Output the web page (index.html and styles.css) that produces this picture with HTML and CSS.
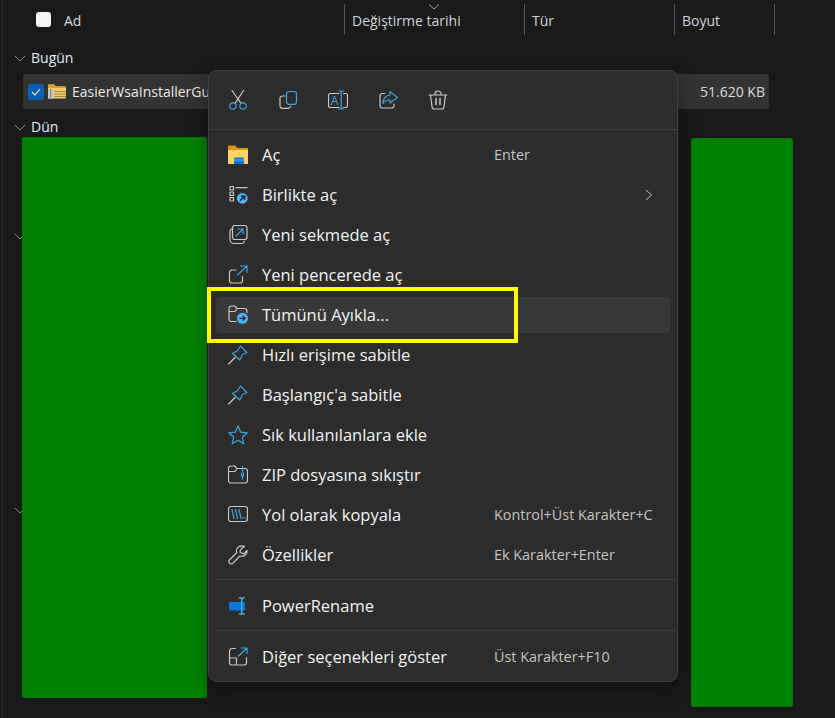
FILE: index.html
```html
<!DOCTYPE html>
<html lang="tr">
<head>
<meta charset="utf-8">
<title>Explorer</title>
<link rel="stylesheet" href="styles.css">
</head>
<body>
<div class="explorer">
  <header class="head">
    <div class="col-name"><span class="check-empty"></span><span class="head-label">Ad</span></div>
    <div class="col col-date">Değiştirme tarihi</div>
    <div class="col col-type">Tür</div>
    <div class="col col-size">Boyut</div>
    <div class="col col-end"></div>
  </header>
  <svg class="sort" width="12" height="6" viewBox="0 0 12 6"><path d="M1 .5L6 5L11 .5" fill="none" stroke="#aaa"/></svg>

  <div class="group"><svg class="chev" width="12" height="7" viewBox="0 0 12 7"><path d="M1 1L6 6L11 1" fill="none" stroke="#8c8c8c"/></svg><span>Bugün</span></div>
  <div class="row">
    <span class="check-on"><svg width="10" height="8" viewBox="0 0 10 8"><path d="M1 4.2L3.8 7L9 1" fill="none" stroke="#fff" stroke-width="1.1"/></svg></span>
    <svg class="zip" width="18" height="15" viewBox="0 0 18 15"><path d="M0 1.5A1 1 0 0 1 1 .5H6L8 2.5H17A1 1 0 0 1 18 3.5V13.5A1 1 0 0 1 17 14.5H1A1 1 0 0 1 0 13.5Z" fill="#f6cf66"/><path d="M0 1.5A1 1 0 0 1 1 .5H6L8 2.5H18V4H0Z" fill="#d9a32a"/><path d="M6 7.5H18M6 10H18M6 12.500H18" stroke="#8a7a45" stroke-width=".8"/><rect x="0" y="5" width="5.500" height="9.500" fill="#c9c9c9"/><path d="M2.700 5V14" stroke="#777" stroke-width="1"/></svg>
    <span class="file-name">EasierWsaInstallerGui</span>
    <span class="file-size">51.620 KB</span>
  </div>
  <div class="group"><svg class="chev" width="12" height="7" viewBox="0 0 12 7"><path d="M1 1L6 6L11 1" fill="none" stroke="#8c8c8c"/></svg><span>Dün</span></div>
  <div class="group group-mid"><svg class="chev" width="12" height="7" viewBox="0 0 12 7"><path d="M1 1L6 6L11 1" fill="none" stroke="#8c8c8c"/></svg></div>
  <div class="group group-low"><svg class="chev" width="12" height="7" viewBox="0 0 12 7"><path d="M1 1L6 6L11 1" fill="none" stroke="#8c8c8c"/></svg></div>
</div>

<div class="redact redact-left"></div>
<div class="redact redact-right"></div>

<nav class="menu">
  <div class="toolbar">
    <svg class="ic" viewBox="0 0 20 20"><path class="g" d="M4 .5L12.800 13.200M15.500 .5L7.200 13.200"/><circle class="b" cx="5" cy="16" r="3.200"/><circle class="b" cx="15" cy="16" r="3.200"/></svg>
    <svg class="ic" viewBox="0 0 20 20"><rect class="b" x="8.500" y="1.500" width="10" height="12.800" rx="2.500"/><path class="g" d="M7 6H4.500A2.500 2.500 0 0 0 2 8.500V15.800A2.500 2.500 0 0 0 4.500 18.300H10A2.500 2.500 0 0 0 12.500 16.300"/></svg>
    <svg class="ic" viewBox="0 0 20 20"><path class="g" d="M11 3.500H2.500A2 2 0 0 0 .5 5.500V15.500A2 2 0 0 0 2.500 17.500H11M15.500 3.500H17.500A2 2 0 0 1 19.500 5.500V15.500A2 2 0 0 1 17.500 17.500H15.500"/><path class="b" d="M11 1H15.500M13.250 1V19M11 19H15.500"/><text class="ic-a" x="2.800" y="15">A</text></svg>
    <svg class="ic" viewBox="0 0 20 20"><path class="g" d="M7 3.500H4.500A2.500 2.500 0 0 0 2 6V15.500A2.500 2.500 0 0 0 4.500 18H13.500A2.500 2.500 0 0 0 16 15.500V14"/><path class="b" d="M12 1.500L19.500 7.500L12 13V10C8.500 10 6.500 11 5 13.500C5 8.500 8 5 12 5Z"/></svg>
    <svg class="ic" viewBox="0 0 20 20"><path class="g" d="M1 5H19M7 4.500C7 2.500 8.300 1 10 1S13 2.500 13 4.500M2.500 5L4 16.500A2.500 2.500 0 0 0 6.500 19H13.500A2.500 2.500 0 0 0 16 16.500L17.500 5"/><path class="g thick" d="M8 8.500V14.500M12 8.500V14.500"/></svg>
  </div>
  <ul class="items">
    <li class="item"><svg class="ic" viewBox="0 0 20 20"><path d="M0 1.500A1 1 0 0 1 1 .5H7L9.500 3H20V6H0Z" fill="#d69a12"/><path d="M0 5H20V19H0Z" fill="#fdd262"/><path d="M6 14A1.500 1.500 0 0 1 7.500 12.500H14.500A1.500 1.500 0 0 1 16 14V19H6Z" fill="#0f78d4"/><path d="M6 15H16" stroke="#6cb8f0"/></svg><span>Aç</span><span class="key">Enter</span></li>
    <li class="item"><svg class="ic" viewBox="0 0 20 20"><path class="g" d="M2 1.500H5.500V5H2ZM2 7H5.500V10.500H2ZM2 12.500H5.500V16H2ZM8 2.700H19"/><circle cx="14.300" cy="13.300" r="5.400" fill="#4cb6f5"/><path d="M12 15.800L16.300 11.500M13 11.200H16.600V14.800" fill="none" stroke="#1c1c1c" stroke-width="1.400"/></svg><span>Birlikte aç</span><svg class="more" width="8" height="12" viewBox="0 0 8 12"><path d="M1 1L6.500 6L1 11" fill="none" stroke="#c8c8c8"/></svg></li>
    <li class="item"><svg class="ic" viewBox="0 0 20 20"><rect class="g" x="4.500" y=".5" width="14.500" height="14" rx="2.500"/><path class="g" d="M4.500 3.500A3 3 0 0 0 2 6.500V14.500A4 4 0 0 0 6 18.500H13.500A3 3 0 0 0 16.500 16"/><path class="b" d="M8 11L15 4M10 4H15V9"/></svg><span>Yeni sekmede aç</span></li>
    <li class="item"><svg class="ic" viewBox="0 0 20 20"><path class="g" d="M8 5H4A2.500 2.500 0 0 0 1.500 7.500V15.500A2.500 2.500 0 0 0 4 18H12A2.500 2.500 0 0 0 14.500 15.500V11.500"/><path class="b" d="M9.500 10L19 1M12.500 1H19V7.500"/></svg><span>Yeni pencerede aç</span></li>
    <li class="item hover"><svg class="ic" viewBox="0 0 20 20"><path class="g" d="M8 16.500H3.500A2.500 2.500 0 0 1 1 14V3.500A2.500 2.500 0 0 1 3.500 1H6.500L9 3.500H16.500A2.500 2.500 0 0 1 19 6V7.500M1 6.500H7L9 3.500"/><circle cx="14.500" cy="13.300" r="5.500" fill="#4cb6f5"/><path d="M11.500 13.300H17M14.700 11L17 13.300L14.700 15.600" fill="none" stroke="#1c1c1c" stroke-width="1.300"/></svg><span>Tümünü Ayıkla...</span></li>
    <li class="item"><svg class="ic" viewBox="0 0 20 20"><path class="b" d="M12.500 1L19 7.500L14.500 9.500L11.800 15L4.500 8.500L9.800 5.500Z"/><path class="g" d="M.7 19L7 12.500"/></svg><span>Hızlı erişime sabitle</span></li>
    <li class="item"><svg class="ic" viewBox="0 0 20 20"><path class="b" d="M12.500 1L19 7.500L14.500 9.500L11.800 15L4.500 8.500L9.800 5.500Z"/><path class="g" d="M.7 19L7 12.500"/></svg><span>Başlangıç'a sabitle</span></li>
    <li class="item"><svg class="ic" viewBox="0 0 20 20"><path class="b" d="M10 1L12.700 7.200L19.300 7.800L14.300 12.200L15.800 18.800L10 15.300L4.200 18.800L5.700 12.200L.7 7.800L7.300 7.200Z"/></svg><span>Sık kullanılanlara ekle</span></li>
    <li class="item"><svg class="ic" viewBox="0 0 20 20"><path class="g" d="M3 1H6.500L9 3.500H17A2.500 2.500 0 0 1 19.500 6V15.500A2.500 2.500 0 0 1 17 18H3A2.500 2.500 0 0 1 .5 15.500V3.500A2.500 2.500 0 0 1 3 1ZM.5 6.500H7L9 3.500"/><path class="b" d="M14.500 1V3M14.500 4.500V6.500M13.500 8H15.500V11H13.500ZM14.500 11V14"/></svg><span>ZIP dosyasına sıkıştır</span></li>
    <li class="item"><svg class="ic" viewBox="0 0 20 20"><rect class="g" x=".5" y="1.500" width="19" height="15" rx="2.500"/><path class="b" d="M4 4.500L6 13.500M7.500 4.500L9.500 13.500M11 4.500L13 13.500M14.800 13H15.800M16.800 13H17.600"/></svg><span>Yol olarak kopyala</span><span class="key">Kontrol+Üst Karakter+C</span></li>
    <li class="item"><svg class="ic" viewBox="0 0 20 20"><path class="g" d="M14 .8A5.300 5.300 0 0 0 8.700 7.800L1.600 14.800A2.300 2.300 0 0 0 4.900 18.100L11.900 11A5.300 5.300 0 0 0 19 5.500L15.500 9L11.800 7L13.500 3.500L16.500 1.500A5.300 5.300 0 0 0 14 .8Z"/></svg><span>Özellikler</span><span class="key">Ek Karakter+Enter</span></li>
    <li class="sep"></li>
    <li class="item"><svg class="ic" viewBox="0 0 20 20"><rect x="1" y="6" width="16" height="8.500" rx="1" fill="#0f78d4"/><path d="M10.700 2H16.700M13.700 2V18M10.700 18H16.700" fill="none" stroke="#3bb0e8" stroke-width="1.500"/></svg><span>PowerRename</span></li>
    <li class="sep"></li>
    <li class="item"><svg class="ic" viewBox="0 0 20 20"><path class="g" d="M7.500 1.500H4A2.500 2.500 0 0 0 1.500 4V15.500A2.500 2.500 0 0 0 4 18H16A2.500 2.500 0 0 0 18.500 15.500V10.500M1.500 11H8.500V18"/><path class="b" d="M10.500 9L19 1M13 1H19V6.500"/></svg><span>Diğer seçenekleri göster</span><span class="key">Üst Karakter+F10</span></li>
  </ul>
</nav>

<div class="callout"></div>
</body>
</html>
```

FILE: styles.css
```css
* { box-sizing: border-box; }
html, body { margin: 0; padding: 0; }
body {
  position: relative;
  width: 835px;
  height: 718px;
  overflow: hidden;
  background: #191919;
  font-family: "Open Sans", "Noto Sans", sans-serif;
  color: #e6e6e6;
}
.explorer {
  height: 718px;
  margin-left: 2px;
  border-left: 1px solid #2a2a2a;
  font-size: 14px;
}
.head { display: flex; height: 40px; padding-top: 4px; }
.col-name { display: flex; align-items: flex-start; width: 341px; padding: 8px 0 0 33px; }
.check-empty { width: 15px; height: 15px; border-radius: 3px; background: #f3f3f3; }
.head-label { margin-left: 13px; line-height: 17px; color: #d6dbe0; }
.col { height: 31px; border-left: 1px solid #555; padding: 8px 0 0 7px; line-height: 17px; color: #d0d4d8; }
.col-date { width: 180px; }
.col-type { width: 150px; }
.col-size { width: 100px; }
.col-end { width: 1px; }
.sort { position: absolute; left: 428px; top: 4px; }
.group { display: flex; align-items: center; height: 24px; margin-top: 6px; padding-left: 11px; }
.group span { margin-left: 5px; padding-bottom: 2px; color: #e4ecf2; }
.group-mid { margin-top: 85px; }
.group-low { margin-top: 250px; }
.chev { flex: none; }
.row {
  display: flex;
  align-items: center;
  width: 746px;
  height: 35px;
  margin: 4px 0 0 20px;
  padding: 0 3px 0 4px;
  background: #333333;
  border: 1px solid #2f2f2f;
}
.check-on {
  display: flex;
  align-items: center;
  justify-content: center;
  width: 16px;
  height: 16px;
  border-radius: 3px;
  background: #0a5fb4;
}
.zip { margin-left: 4px; }
.file-name { margin-left: 6px; color: #e8e8e8; }
.file-size { margin-left: auto; color: #dcdcdc; }

.redact { position: absolute; background: #008000; border-radius: 3px; }
.redact-left { left: 22px; top: 137px; width: 185px; height: 561px; }
.redact-right { left: 691px; top: 138px; width: 102px; height: 569px; }

.menu {
  position: absolute;
  left: 208px;
  top: 70px;
  width: 470px;
  height: 612px;
  background: #2c2c2c;
  border: 1px solid #404040;
  border-radius: 9px;
  box-shadow: 0 6px 18px rgba(0, 0, 0, .35);
}
.toolbar {
  display: flex;
  align-items: center;
  gap: 30px;
  height: 59px;
  padding: 0 0 0 19px;
  border-bottom: 1px solid #3e3e3e;
}
.ic { flex: none; width: 20px; height: 20px; display: block; }
.g, .b { fill: none; stroke-width: 1.200; stroke-linecap: round; stroke-linejoin: round; }
.g { stroke: #c8c8c8; }
.b { stroke: #3ba5e6; }
.thick { stroke-width: 1.500; }
.ic-a { font-size: 12px; font-family: "Open Sans", sans-serif; fill: #3ba5e6; }
.items { display: flex; flex-direction: column; list-style: none; margin: 0; padding: 5px 0 0 7px; }
.item {
  display: grid;
  grid-template-columns: 34px 232px 1fr;
  align-items: center;
  flex: none;
  width: 454px;
  height: 36px;
  margin: 2px 0;
  padding-left: 12px;
  border-radius: 4px;
  font-size: 16.500px;
  color: #f2f2f2;
}
.item > span { padding-bottom: 2px; }
.hover { background: #383838; }
.key { font-size: 14.400px; color: #c4c4c4; white-space: nowrap; }
.more { justify-self: end; margin-right: 17px; }
.sep { flex: none; width: 460px; height: 1px; margin: 4px 0 6px -1px; background: #3e3e3e; }

.callout {
  position: absolute;
  left: 207px;
  top: 287px;
  width: 311px;
  height: 56px;
  border: 4px solid #ffff00;
}
```
